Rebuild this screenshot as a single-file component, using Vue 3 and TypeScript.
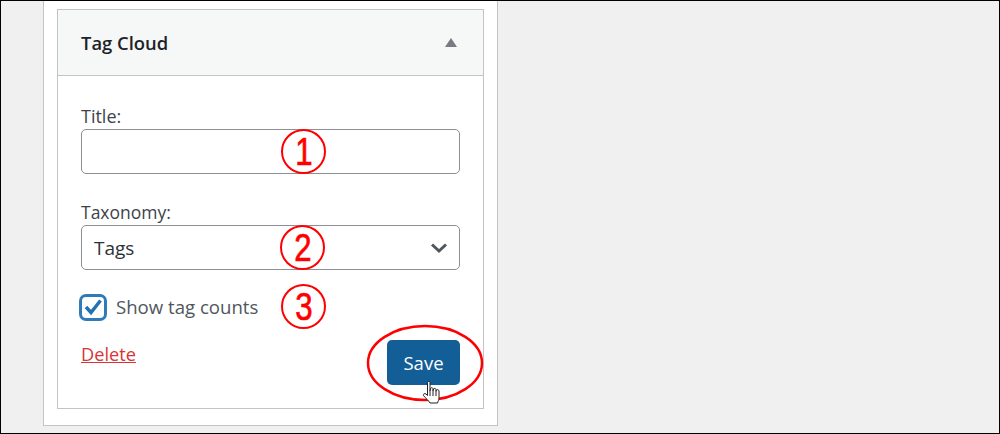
<script setup lang="ts">
const marks = [
  { n: '1', cls: 'mark-1' },
  { n: '2', cls: 'mark-2' },
  { n: '3', cls: 'mark-3' }
]
</script>

<template>
  <div class="screen">
    <div class="panel">
      <div class="widget">
        <div class="widget-head">
          <h3>Tag Cloud</h3>
          <span class="caret" />
        </div>
        <div class="widget-body">
          <label class="field-label">Title:</label>
          <div class="input" />
          <label class="field-label second">Taxonomy:</label>
          <div class="input select">
            <span>Tags</span>
            <svg width="18" height="12" viewBox="0 0 18 12">
              <path d="M2 2.5 L9 9 L16 2.5" fill="none" stroke="#50575e" stroke-width="3" />
            </svg>
          </div>
          <div class="check-row">
            <span class="checkbox">
              <svg width="20" height="18" viewBox="0 0 20 18">
                <path d="M3 9 L8 14.5 L17.5 2.5" fill="none" stroke="#2271b1" stroke-width="3.4" />
              </svg>
            </span>
            <span class="check-label">Show tag counts</span>
          </div>
          <div class="actions">
            <a class="delete">Delete</a>
            <button class="save">Save</button>
          </div>
        </div>
      </div>
    </div>

    <span v-for="m in marks" :key="m.n" class="mark" :class="m.cls"><span class="digit">{{ m.n }}</span></span>
    <svg class="oval" width="120" height="80" viewBox="0 0 120 80">
      <ellipse cx="59" cy="40" rx="57" ry="37" fill="none" stroke="#f00" stroke-width="2.5" />
    </svg>
    <svg class="cursor" width="20" height="26" viewBox="0 0 20 26">
      <path
        d="M5.5 2.5 C5.5 1 8 1 8 2.5 L8 11 L8.5 8.5 C9 7.5 10.5 7.5 11 8.5 L11 11 L11.5 9 C12 8.2 13.5 8.2 14 9.2 L14 11.5 L14.5 10 C15.2 9.2 16.8 9.6 17 11 L17 18 C17 20 16 21 15.5 23 L8 23 C7 20.5 3.5 18.5 1.5 15.5 C0.8 14 2.5 13 4 14 L5.5 15.5 Z"
        fill="#fff"
        stroke="#222"
        stroke-width="1"
      />
      <path d="M8 11 L8 16 M11 11 L11 16 M14 11.5 L14 16" stroke="#222" stroke-width="1" />
    </svg>
  </div>
</template>

<style>
body {
  margin: 0;
  background: #f0f0f1;
}
</style>

<style scoped>
.screen {
  position: relative;
  box-sizing: border-box;
  width: 1000px;
  height: 434px;
  overflow: hidden;
  border: 1px solid #000;
  background: #f0f0f1;
  font-family: "Open Sans", "Noto Sans", sans-serif;
  color: #3c434a;
  padding-left: 42px;
}

.panel {
  box-sizing: border-box;
  width: 455px;
  height: 425px;
  background: #fff;
  border: 1px solid #c3c4c7;
  border-top: 0;
  padding: 8px 13px 0;
}

.widget {
  box-sizing: border-box;
  width: 427px;
  height: 400px;
  border: 1px solid #c3c4c7;
  background: #fff;
}

.widget-head {
  box-sizing: border-box;
  height: 66px;
  display: flex;
  align-items: center;
  justify-content: space-between;
  padding: 0 26px 0 23px;
  background: #f6f7f7;
  border-bottom: 1px solid #c3c4c7;
}

.widget-head h3 {
  margin: 0;
  font-size: 18.4px;
  font-weight: 600;
  color: #1d2327;
}

.caret {
  width: 0;
  height: 0;
  border-left: 6px solid transparent;
  border-right: 6px solid transparent;
  border-bottom: 9px solid #787c82;
}

.widget-body {
  padding: 27px 23px 0;
  font-size: 18px;
}

.field-label {
  display: block;
  height: 26px;
  line-height: 26px;
}

.second {
  margin-top: 25px;
  height: 26px;
  font-size: 17.5px;
}

.input {
  box-sizing: border-box;
  width: 379px;
  height: 45px;
  background: #fff;
  border: 1px solid #8c8f94;
  border-radius: 5px;
}

.select {
  display: flex;
  align-items: center;
  justify-content: space-between;
  padding: 0 11px 0 12px;
  color: #2c3338;
  font-size: 19px;
}

.check-row {
  display: flex;
  align-items: center;
  gap: 9px;
  margin: 23px 0 0 -2px;
  height: 28px;
  color: #50575e;
}

.check-label {
  font-size: 18.6px;
  margin-top: -2px;
}

.checkbox {
  box-sizing: border-box;
  width: 28px;
  height: 27px;
  display: flex;
  align-items: center;
  justify-content: center;
  border: 3px solid #2f7ab8;
  border-radius: 7px;
}

.checkbox svg {
  overflow: visible;
}

.actions {
  display: flex;
  justify-content: space-between;
  align-items: flex-start;
  margin-top: 19px;
}

.delete {
  margin-top: 1px;
  color: #d63638;
  text-decoration: underline;
  line-height: 26px;
  font-size: 18.2px;
}

.save {
  box-sizing: border-box;
  width: 73px;
  height: 45px;
  border: 0;
  border-radius: 5px;
  background: #135e96;
  color: #fff;
  font: inherit;
  font-size: 18.5px;
  font-weight: 500;
}

.mark {
  position: absolute;
  box-sizing: border-box;
  width: 45px;
  height: 45px;
  display: flex;
  align-items: center;
  justify-content: center;
  border: 2.5px solid #f00;
  border-radius: 50%;
  color: #f00;
  font-family: "Liberation Sans", sans-serif;
  font-size: 39px;
  line-height: 1;
  -webkit-text-stroke: 0.7px #f00;
}

.digit {
  display: inline-block;
  transform: scaleX(0.8);
}

.mark-1 { top: 128px; left: 280px; }
.mark-2 { top: 224px; left: 279px; }
.mark-3 { top: 283px; left: 280px; }

.oval {
  position: absolute;
  left: 365px;
  top: 322px;
}

.cursor {
  position: absolute;
  left: 421px;
  top: 379px;
}
</style>
